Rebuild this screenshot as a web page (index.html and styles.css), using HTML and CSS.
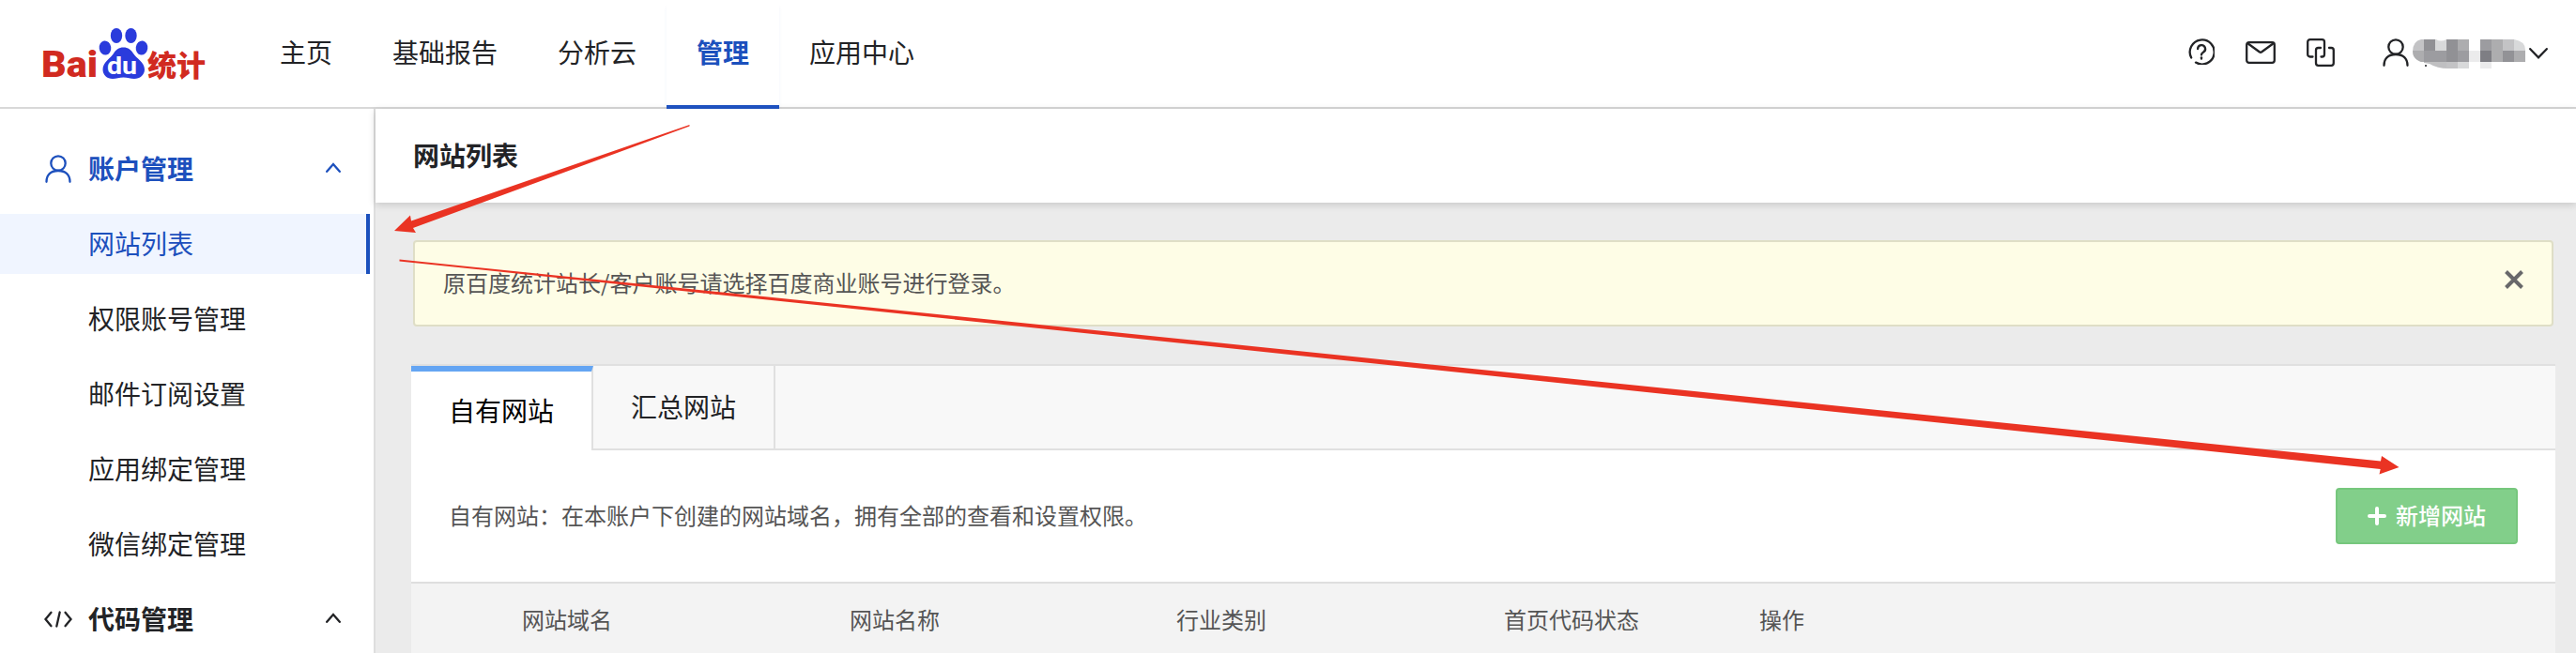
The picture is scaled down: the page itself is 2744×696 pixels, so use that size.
FILE: index.html
```
<!DOCTYPE html>
<html lang="zh-CN">
<head>
<meta charset="utf-8">
<title>百度统计 - 网站列表</title>
<link rel="stylesheet" href="styles.css">
</head>
<body>
<header class="header">
  <a class="logo" aria-label="百度统计">
    <svg width="186" height="80" viewBox="-5 0 186 80">
      <text class="logo-latin" x="-1" y="54" textLength="60" lengthAdjust="spacingAndGlyphs">Bai</text>
      <g fill="#2a3bdc">
        <ellipse cx="67" cy="23" rx="6.3" ry="7.6" transform="rotate(-8 67 23)"/>
        <ellipse cx="79" cy="10" rx="6.2" ry="8"/>
        <ellipse cx="94.500" cy="10" rx="6.200" ry="8"/>
        <ellipse cx="106" cy="23" rx="6.300" ry="7.600" transform="rotate(8 106 23)"/>
        <path d="M86.500 22.500c5 0 8 2.500 10.500 6.500 3 5 12 9 12 17 0 6-5 10-11 10-4 0-7-1.500-11.500-1.500S79 56 75 56c-6 0-10.500-4-10.500-10 0-8 8.500-12 11.500-17 2.500-4 5.500-6.500 10.500-6.500z"/>
      </g>
      <text class="logo-du" x="69" y="51" textLength="32" lengthAdjust="spacingAndGlyphs">du</text>
      <text class="logo-cn" x="112" y="52.500" textLength="62" lengthAdjust="spacingAndGlyphs">统计</text>
    </svg>
  </a>
  <nav class="nav">
    <a class="nav-item">主页</a>
    <a class="nav-item">基础报告</a>
    <a class="nav-item">分析云</a>
    <a class="nav-item nav-item-active">管理</a>
    <a class="nav-item">应用中心</a>
  </nav>
  <div class="tools">
    <svg class="icon tool-help" width="28" height="28" viewBox="0 0 28 28">
      <path d="M3.200 20.500A13 13 0 1 1 8 25.600"/>
      <path d="M10.100 11.200a4 4 0 1 1 5.800 3.500c-1.300.8-1.900 1.300-1.900 2.800"/>
      <path d="M14 20.300v1.400"/>
    </svg>
    <svg class="icon tool-mail" width="32" height="24" viewBox="0 0 32 24">
      <rect x="1.200" y="1.200" width="29.600" height="21.600" rx="2.500"/>
      <path d="M2 2l12.700 9.300q1.300.9 2.600 0L30 2"/>
    </svg>
    <svg class="icon tool-link" width="30" height="30" viewBox="0 0 30 30">
      <path d="M6.500 19.500H3.700A2.500 2.500 0 0 1 1.200 17V3.700A2.500 2.500 0 0 1 3.700 1.200h12.800A2.500 2.500 0 0 1 19 3.700V17a2.500 2.500 0 0 1-2.500 2.500h-1"/>
      <path d="M15 10h-2.500a2.500 2.500 0 0 0-2.500 2.500v13.800a2.500 2.500 0 0 0 2.500 2.500h13.800a2.500 2.500 0 0 0 2.500-2.500v-13.800a2.500 2.500 0 0 0-2.500-2.500H24"/>
    </svg>
    <svg class="icon tool-user" width="28" height="30" viewBox="0 0 28 30">
      <circle cx="14" cy="9" r="7.700"/>
      <path d="M1.500 28.800C1.500 21.500 6 17 14 17S26.500 21.500 26.500 28.800"/>
    </svg>
    <svg class="account-mask" width="120" height="32" viewBox="0 0 120 32" shape-rendering="crispEdges">
      <defs><clipPath id="mask-shape"><path d="M9 0H25Q30 3 36 0H108Q120 2 120 11V24H84V31H60V31H38Q26 31 18 26Q0 24 0 13Q0 2 9 0z"/></clipPath></defs>
      <g clip-path="url(#mask-shape)">
        <path fill="#c3c3c5" d="M0 0h12v12H0zM36 24h12v7H36zM96 0h12v12H96z"/>
        <path fill="#919195" d="M12 0h12v12H12zM36 0h12v12H36zM36 12h12v12H36z"/>
        <path fill="#d8d9da" d="M24 0h12v12H24zM108 0h12v12h-12zM48 24h12v7H48z"/>
        <path fill="#adadaf" d="M48 0h12v12H48zM0 12h12v12H0zM84 0h12v12H84zM84 12h12v12H84zM108 12h12v12h-12z"/>
        <path fill="#9c9ca0" d="M12 12h24v12H12zM48 12h12v12H48zM72 0h12v12H72z"/>
        <path fill="#ebebec" d="M60 12h12v12H60zM72 24h12v7H72z"/>
        <path fill="#7e7e84" d="M72 12h12v12H72z"/>
        <path fill="#929296" d="M96 12h12v12H96z"/>
        <path fill="#bfbfc1" d="M12 24h24v7H12z"/>
        <path fill="#fff" d="M60 0h12v12H60zM60 24h12v8H60z"/>
      </g>
      <path fill="#55565a" d="M13 27h2v2h-2z"/>
    </svg>
    <svg class="icon tool-arrow" width="20" height="12" viewBox="0 0 20 12"><path d="M1.200 1.200L10 10.300l8.800-9.100"/></svg>
  </div>
</header>
<div class="body">
  <aside class="sidebar">
    <div class="group group-active">
      <svg class="icon group-icon" width="28" height="30" viewBox="0 0 28 30">
        <circle cx="14" cy="9" r="7.700"/>
        <path d="M1.500 28.800C1.500 21.500 6 17 14 17S26.500 21.500 26.500 28.800"/>
      </svg>
      <span class="group-name">账户管理</span>
      <svg class="icon group-arrow" width="16" height="11" viewBox="0 0 16 11"><path d="M1.200 9.800L8 2l6.800 7.800"/></svg>
    </div>
    <a class="entry entry-active">网站列表</a>
    <a class="entry">权限账号管理</a>
    <a class="entry">邮件订阅设置</a>
    <a class="entry">应用绑定管理</a>
    <a class="entry">微信绑定管理</a>
    <div class="group">
      <svg class="icon group-icon group-icon-wide" width="30" height="18" viewBox="0 0 30 18">
        <path d="M7.500 1.800L1.500 9l6 7.200M22.500 1.800L28.500 9l-6 7.200M16.700 1.500L13.300 16.500"/>
      </svg>
      <span class="group-name">代码管理</span>
      <svg class="icon group-arrow" width="16" height="11" viewBox="0 0 16 11"><path d="M1.200 9.800L8 2l6.800 7.800"/></svg>
    </div>
  </aside>
  <main class="main">
    <h1 class="title">网站列表</h1>
    <div class="notice">
      <span class="notice-text">原百度统计站长/客户账号请选择百度商业账号进行登录。</span>
      <svg class="notice-close" width="20" height="20" viewBox="0 0 20 20"><path d="M1.500 1.500l17 17M18.500 1.500l-17 17"/></svg>
    </div>
    <section class="panel">
      <div class="tabs">
        <a class="tab tab-active">自有网站</a>
        <a class="tab">汇总网站</a>
        <div class="tabs-rest"></div>
      </div>
      <div class="intro">
        <span class="intro-text">自有网站：在本账户下创建的网站域名，拥有全部的查看和设置权限。</span>
        <button class="add">
          <svg width="20" height="20" viewBox="0 0 20 20"><path d="M10 2v16M2 10h16" stroke="#fff" stroke-width="4" stroke-linecap="round"/></svg>
          <span class="add-text">新增网站</span>
        </button>
      </div>
      <div class="columns">
        <span>网站域名</span>
        <span>网站名称</span>
        <span>行业类别</span>
        <span>首页代码状态</span>
        <span>操作</span>
      </div>
    </section>
  </main>
</div>
<svg class="arrows" width="2744" height="696" viewBox="0 0 2744 696">
  <path d="M734.500 133L438 235.500 437 229.500 420 246 443 248 440 243 734.500 134.500z"/>
  <path d="M425.500 276.600L2536 491.500 2537 486 2555.500 498 2534.500 505.500 2535.700 500 425.500 278.400z"/>
</svg>
</body>
</html>
```
FILE: styles.css
```
* {
  box-sizing: border-box;
}

body {
  margin: 0;
  width: 2744px;
  height: 696px;
  overflow: hidden;
  display: flex;
  flex-direction: column;
  background: #ebebeb;
  color: #222326;
  font-family: "Noto Sans CJK SC", sans-serif;
  font-size: 28px;
}

.icon {
  display: block;
  flex: none;
  fill: none;
  stroke: currentColor;
  stroke-width: 2.3;
  stroke-linecap: round;
}

.header {
  flex: none;
  display: flex;
  height: 116px;
  background: #fff;
  border-bottom: 2px solid #d8d8d8;
}

.logo {
  width: 226px;
  margin-left: 40px;
  padding-top: 28px;
}

.logo svg {
  display: block;
}

.logo-latin {
  fill: #d12a20;
  font: 900 38px Roboto, sans-serif;
}

.logo-du {
  fill: #fff;
  font: bold 26px Roboto, sans-serif;
}

.logo-cn {
  fill: #d12a20;
  font: 900 31px "Noto Sans CJK SC", sans-serif;
}

.nav {
  display: flex;
}

.nav-item {
  height: 114px;
  padding: 0 32px;
  line-height: 110px;
}

.nav-item-active {
  height: 116px;
  color: #1b50bd;
  font-weight: 700;
  border-bottom: 4px solid #1f54c4;
  box-shadow: 0 5px 5px -3px rgba(31, 84, 196, 0.3);
}

.tools {
  flex: 1;
  display: flex;
  justify-content: flex-end;
  align-items: flex-start;
  padding: 41px 30px 0 0;
}

.tool-mail {
  margin: 3px 0 0 33px;
}

.tool-link {
  margin-left: 33px;
}

.tool-user {
  margin-left: 51px;
}

.account-mask {
  display: block;
  margin: 1px 0 0 4px;
}

.tool-arrow {
  margin: 10px 0 0 4px;
}

.body {
  flex: 1;
  display: flex;
  min-height: 0;
}

.sidebar {
  flex: none;
  width: 400px;
  padding-top: 32px;
  background: #fff;
  border-right: 2px solid #dedede;
}

.group {
  display: flex;
  align-items: center;
  height: 64px;
  margin-bottom: 16px;
  padding: 0 35px 0 46px;
  font-weight: 700;
}

.group-active {
  color: #1d50bd;
}

.group-icon {
  margin-left: 2px;
}

.group-icon-wide {
  margin-left: 1px;
  margin-right: -1px;
}

.group-name {
  flex: 1;
  margin-left: 18px;
  padding-bottom: 2px;
}

.group-arrow {
  margin-top: -4px;
}

.entry {
  display: block;
  width: 394px;
  height: 64px;
  margin-bottom: 16px;
  padding-left: 94px;
  line-height: 62px;
}

.entry-active {
  color: #1d50bd;
  background: #f0f5ff;
  border-right: 4px solid #1b50bd;
}

.main {
  flex: 1;
  min-width: 0;
}

.title {
  height: 100px;
  margin: 0;
  padding-left: 40px;
  background: #fff;
  box-shadow: 0 2px 8px rgba(0, 0, 0, 0.16);
  font-size: 28px;
  font-weight: 700;
  line-height: 98px;
}

.notice {
  display: flex;
  justify-content: space-between;
  align-items: center;
  height: 92px;
  margin: 40px 24px 0 40px;
  padding: 0 30px;
  color: #555;
  background: #fefde6;
  border: 2px solid #dfdec6;
  border-radius: 4px;
  font-size: 24px;
}

.notice-text {
  padding-bottom: 4px;
}

.notice-close {
  margin-top: -8px;
  fill: none;
  stroke: #68686a;
  stroke-width: 4;
}

.panel {
  margin: 40px 22px 0 38px;
  background: #fff;
  border-top: 2px solid #e0e0e0;
}

.tabs {
  display: flex;
  height: 90px;
}

.tab {
  width: 194px;
  padding-left: 40px;
  background: #f8f8f8;
  border-right: 2px solid #e0e0e0;
  border-bottom: 2px solid #e0e0e0;
  line-height: 86px;
}

.tab-active {
  color: #000;
  background: #fff;
  border-top: 6px solid #64a5f3;
  border-bottom: 0;
  line-height: 82px;
}

.tabs-rest {
  flex: 1;
  background: #f8f8f8;
  border-bottom: 2px solid #e0e0e0;
}

.intro {
  display: flex;
  justify-content: space-between;
  align-items: center;
  height: 140px;
  padding: 0 40px;
  color: #555;
  font-size: 24px;
}

.intro-text,
.add-text {
  padding-bottom: 4px;
}

.add {
  display: flex;
  align-items: center;
  gap: 10px;
  width: 194px;
  height: 60px;
  padding: 0 0 0 32px;
  color: #fff;
  background: #82cf8a;
  border: 2px solid #76c77d;
  border-radius: 4px;
  font-family: inherit;
  font-size: 24px;
  font-weight: 500;
}

.columns {
  display: grid;
  grid-template-columns: 349px 348px 349px 272px 1fr;
  height: 76px;
  padding-left: 118px;
  color: #555;
  background: #f3f3f3;
  border-top: 2px solid #dedede;
  font-size: 24px;
  line-height: 76px;
}

.arrows {
  position: absolute;
  top: 0;
  left: 0;
  fill: #ea3323;
  pointer-events: none;
}
```
